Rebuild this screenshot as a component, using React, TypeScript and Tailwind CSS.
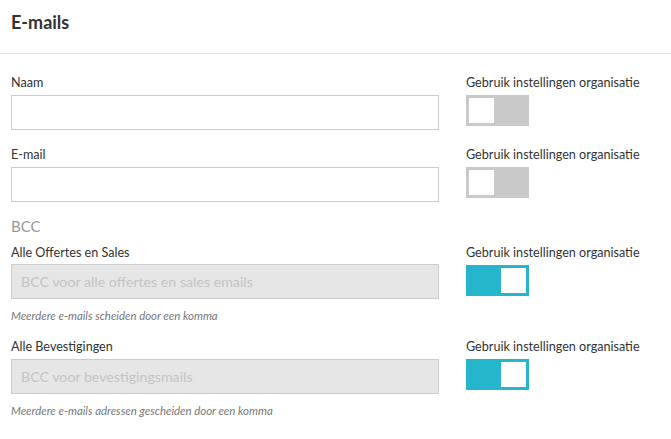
import React from "react";

function Toggle({ on }: { on: boolean }) {
  return (
    <div
      className={
        "w-[63px] h-[31px] p-[3px] flex " +
        (on ? "bg-[#26b6cc] justify-end" : "bg-[#c9c9c9] justify-start")
      }
    >
      <div className="w-[25px] h-[25px] bg-white" />
    </div>
  );
}

function OrgSetting({ on }: { on: boolean }) {
  return (
    <div className="ml-[27px] flex flex-col">
      <div className="text-[12.6px] leading-[18px] text-[#333] mb-[3px]">
        Gebruik instellingen organisatie
      </div>
      <Toggle on={on} />
    </div>
  );
}

export default function App() {
  return (
    <div
      className="w-[671px] h-[439px] bg-white overflow-hidden"
      style={{ fontFamily: "Lato, 'Open Sans', sans-serif" }}
    >
      <div className="h-[54px] border-b border-[#e6e6e6] px-[11px] pt-[10px]">
        <h1 className="text-[18px] leading-[24px] font-bold text-[#333]">E-mails</h1>
      </div>
      <div className="px-[11px] pt-[20px]">
        <div className="flex">
          <div className="w-[428px] flex flex-col">
            <label className="text-[12.6px] leading-[18px] text-[#333] mb-[3px]">Naam</label>
            <input className="h-[35px] border border-[#cccccc] bg-white outline-none px-[9px]" />
          </div>
          <OrgSetting on={false} />
        </div>
        <div className="flex mt-[16px]">
          <div className="w-[428px] flex flex-col">
            <label className="text-[12.6px] leading-[18px] text-[#333] mb-[3px]">E-mail</label>
            <input className="h-[35px] border border-[#cccccc] bg-white outline-none px-[9px]" />
          </div>
          <OrgSetting on={false} />
        </div>
        <div className="mt-[14px] text-[15px] leading-[20px] text-[#999]">BCC</div>
        <div className="flex mt-[8px]">
          <div className="w-[428px] flex flex-col">
            <label className="text-[12.6px] leading-[18px] text-[#333] mb-[2px]">
              Alle Offertes en Sales
            </label>
            <input
              disabled
              placeholder="BCC voor alle offertes en sales emails"
              className="h-[35px] border border-[#cccccc] bg-[#e6e6e6] outline-none px-[9px] text-[14.2px] placeholder:text-[#c4c4c4]"
            />
            <div className="mt-[9px] text-[11.4px] leading-[16px] italic text-[#777]">
              Meerdere e-mails scheiden door een komma
            </div>
          </div>
          <OrgSetting on={true} />
        </div>
        <div className="flex mt-[14px]">
          <div className="w-[428px] flex flex-col">
            <label className="text-[12.6px] leading-[18px] text-[#333] mb-[3px]">
              Alle Bevestigingen
            </label>
            <input
              disabled
              placeholder="BCC voor bevestigingsmails"
              className="h-[35px] border border-[#cccccc] bg-[#e6e6e6] outline-none px-[9px] text-[14.2px] placeholder:text-[#c4c4c4]"
            />
            <div className="mt-[9px] text-[11.4px] leading-[16px] italic text-[#777]">
              Meerdere e-mails adressen gescheiden door een komma
            </div>
          </div>
          <OrgSetting on={true} />
        </div>
      </div>
    </div>
  );
}
